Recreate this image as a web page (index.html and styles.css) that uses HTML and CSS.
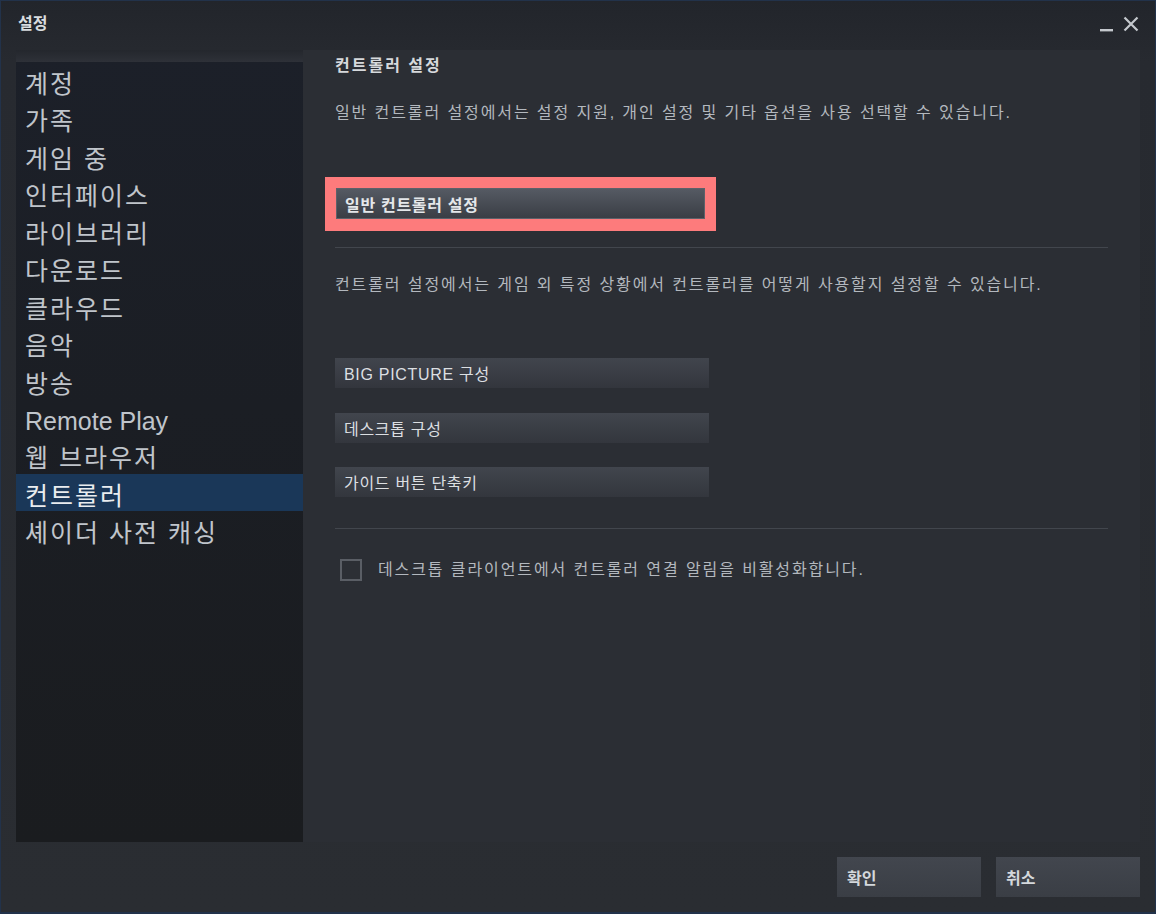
FILE: index.html
```html
<!DOCTYPE html>
<html lang="ko">
<head>
<meta charset="utf-8">
<title>설정</title>
<link rel="stylesheet" href="styles.css">
</head>
<body>
<div class="window">
  <header class="titlebar">
    <span class="title">설정</span>
    <div class="controls">
      <svg class="ctl-min" width="13" height="3" viewBox="0 0 13 3"><rect x="0" y="0" width="13" height="2.4" fill="#c4c8cd"/></svg>
      <svg class="ctl-close" width="16" height="16" viewBox="0 0 16 16"><path d="M1.5 1.5L14.5 14.5M14.5 1.5L1.5 14.5" stroke="#c4c8cd" stroke-width="2.2" fill="none"/></svg>
    </div>
  </header>
  <div class="main">
    <nav class="sidebar">
      <div class="sidebar-strip"></div>
      <ul class="nav-list">
        <li class="nav-item">계정</li>
        <li class="nav-item">가족</li>
        <li class="nav-item">게임 중</li>
        <li class="nav-item">인터페이스</li>
        <li class="nav-item">라이브러리</li>
        <li class="nav-item">다운로드</li>
        <li class="nav-item">클라우드</li>
        <li class="nav-item">음악</li>
        <li class="nav-item">방송</li>
        <li class="nav-item latin">Remote Play</li>
        <li class="nav-item">웹 브라우저</li>
        <li class="nav-item active">컨트롤러</li>
        <li class="nav-item">셰이더 사전 캐싱</li>
      </ul>
    </nav>
    <section class="content">
      <h1 class="content-title">컨트롤러 설정</h1>
      <p class="desc desc-first">일반 컨트롤러 설정에서는 설정 지원, 개인 설정 및 기타 옵션을 사용 선택할 수 있습니다.</p>
      <div class="highlight">
        <button class="btn btn-focus">일반 컨트롤러 설정</button>
      </div>
      <hr class="sep sep-first">
      <p class="desc desc-second">컨트롤러 설정에서는 게임 외 특정 상황에서 컨트롤러를 어떻게 사용할지 설정할 수 있습니다.</p>
      <div class="btn-stack">
        <button class="btn">BIG PICTURE 구성</button>
        <button class="btn">데스크톱 구성</button>
        <button class="btn">가이드 버튼 단축키</button>
      </div>
      <hr class="sep sep-second">
      <label class="check-row">
        <span class="checkbox"></span>
        <span class="check-label">데스크톱 클라이언트에서 컨트롤러 연결 알림을 비활성화합니다.</span>
      </label>
    </section>
  </div>
  <footer class="footer">
    <button class="fbtn">확인</button>
    <button class="fbtn">취소</button>
  </footer>
</div>
</body>
</html>
```
FILE: styles.css
```css
* { box-sizing: border-box; }
html, body { margin: 0; padding: 0; }
body {
  background: #1e2229;
  font-family: "Liberation Sans", "Noto Sans CJK KR", sans-serif;
  color: #bfc4ca;
}
.window {
  width: 1156px;
  height: 914px;
  border: 1px solid #22324a;
  border-bottom-width: 2px;
  background: linear-gradient(180deg, #22252b 0px, #272a30 60px, #2a2d32 100%);
  display: flex;
  flex-direction: column;
}
.titlebar {
  height: 49px;
  flex: none;
  display: flex;
  align-items: flex-start;
  padding: 0 16px 0 17px;
}
.title {
  font-size: 16px;
  font-weight: 700;
  color: #d9dcdf;
  line-height: 20px;
  margin-top: 13px;
}
.controls {
  margin-left: auto;
  display: flex;
  align-items: flex-start;
  gap: 10px;
}
.ctl-min { margin-top: 28px; display: block; }
.ctl-close { margin-top: 15px; display: block; }

.main {
  height: 792px;
  flex: none;
  display: flex;
  margin: 0 15px;
}
.sidebar {
  width: 287px;
  flex: none;
  background: linear-gradient(180deg, #1c2029 0%, #1b1e24 45%, #1a1c1f 100%);
  display: flex;
  flex-direction: column;
}
.sidebar-strip {
  height: 12px;
  background: linear-gradient(180deg, #24272d, #2e3138);
}
.nav-list {
  list-style: none;
  margin: 0;
  padding: 0;
}
.nav-item {
  height: 37.45px;
  padding: 7px 0 0 9px;
  line-height: 30.45px;
  font-size: 25px;
  letter-spacing: 2px;
  color: #c0c5cb;
  white-space: nowrap;
}
.nav-item.latin {
  letter-spacing: 0;
}
.nav-item.active {
  background: #1a3758;
  color: #e9ecef;
}

.content {
  flex: 1;
  background: #2b2e34;
  padding: 6px 32px 0 32px;
  display: flex;
  flex-direction: column;
  align-items: flex-start;
}
.content-title {
  margin: 0;
  font-size: 16px;
  font-weight: 700;
  line-height: 20px;
  color: #d6d9dc;
  letter-spacing: 2px;
}
.desc {
  margin: 0;
  font-size: 16px;
  line-height: 22px;
  color: #b3b8be;
  letter-spacing: 1.9px;
}
.desc-first { margin-top: 26px; }
.desc-second { margin-top: 26px; }
.highlight {
  margin: 53px 0 0 -10px;
  background: #fd7b7c;
  padding: 11px 11px 12px 11px;
}
.btn {
  display: block;
  width: 374px;
  height: 30px;
  border: 0;
  margin: 0;
  padding: 0 0 0 9px;
  text-align: left;
  font-family: inherit;
  font-size: 16px;
  letter-spacing: 0.7px;
  color: #dcdfe2;
  background: linear-gradient(180deg, #41454d 0%, #33363d 100%);
}
.btn-focus {
  width: 369px;
  height: 31px;
  padding-left: 8px;
  border: 1px solid #5c6169;
  background: linear-gradient(180deg, #555a63 0%, #3a3e45 100%);
  color: #e4e7ea;
  font-weight: 700;
}
.sep {
  align-self: stretch;
  height: 1px;
  border: 0;
  margin: 0;
  background: #42464d;
}
.sep-first { margin-top: 16px; }
.btn-stack {
  margin-top: 62px;
  display: flex;
  flex-direction: column;
  gap: 24.5px;
}
.sep-second { margin-top: 31px; }
.check-row {
  margin-top: 30px;
  display: flex;
  align-items: center;
  gap: 16px;
  padding-left: 5px;
}
.checkbox {
  width: 22px;
  height: 22px;
  border: 2px solid #5a5e65;
  background: #2c2f35;
  flex: none;
}
.check-label {
  font-size: 16px;
  line-height: 22px;
  color: #b3b8be;
  letter-spacing: 1.9px;
}

.footer {
  flex: 1;
  display: flex;
  justify-content: flex-end;
  align-items: flex-start;
  gap: 15px;
  padding: 15px 15px 0 0;
}
.fbtn {
  width: 144px;
  height: 40px;
  border: 0;
  padding: 0 0 0 10px;
  text-align: left;
  font-family: inherit;
  font-size: 16px;
  font-weight: 700;
  color: #d4d8dc;
  background: linear-gradient(180deg, #42464e 0%, #3a3e45 100%);
}
```
